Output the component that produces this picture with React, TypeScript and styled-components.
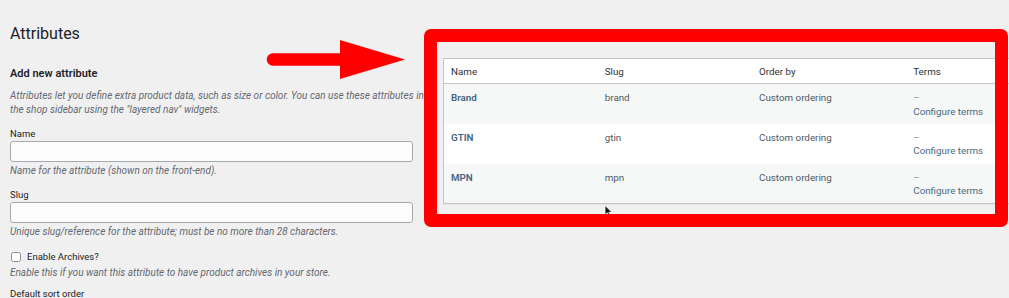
import React from "react";
import styled, { createGlobalStyle } from "styled-components";

const Global = createGlobalStyle`
  html, body { margin: 0; padding: 0; }
  body {
    background: #f0f0f0;
    font-family: Roboto, "Noto Sans", Arial, sans-serif;
    color: #1d2327;
    overflow: hidden;
    width: 1009px;
    height: 298px;
  }
`;

const Page = styled.div`
  position: relative;
  width: 1009px;
  height: 298px;
  overflow: hidden;
  padding: 24px 0 0 10px;
  box-sizing: border-box;
`;

const Title = styled.h1`
  margin: 0;
  font-size: 16px;
  line-height: 20px;
  font-weight: 400;
  color: #1d2327;
`;

const Columns = styled.div`
  display: flex;
  align-items: flex-start;
  gap: 15px;
`;

const LeftCol = styled.div`
  flex: none;
  width: 418px;
`;

const RightCol = styled.div`
  flex: none;
  width: 618px;
  padding-top: 14px;
`;

const SectionTitle = styled.h2`
  margin: 23px 0 0;
  font-size: 11px;
  line-height: 14px;
  font-weight: 600;
  color: #1d2327;
`;

const Help = styled.p<{ $top?: number }>`
  margin: ${(p) => p.$top ?? 0}px 0 0;
  font-size: 10px;
  line-height: 14px;
  font-style: italic;
  color: #646970;
`;

const Label = styled.label<{ $top: number }>`
  display: block;
  margin-top: ${(p) => p.$top}px;
  font-size: 9.5px;
  line-height: 13px;
  color: #1d2327;
`;

const Input = styled.div`
  margin-top: 1px;
  width: 403px;
  height: 21px;
  box-sizing: border-box;
  border: 1px solid #a7aaad;
  border-radius: 3px;
  background: #fdfdfd;
`;

const CheckRow = styled.div`
  display: flex;
  align-items: center;
  gap: 6px;
  margin-top: 11px;
  padding-left: 1px;
  font-size: 9.5px;
  line-height: 13px;
  color: #1d2327;
`;

const Box = styled.span`
  width: 10px;
  height: 10px;
  box-sizing: border-box;
  border: 1px solid #8c8f94;
  border-radius: 2.5px;
  background: #fff;
`;

const Table = styled.table`
  width: 100%;
  border-collapse: collapse;
  background: #fff;
  border: 1px solid #c3c4c7;
  box-shadow: 0 1px 1px rgba(0, 0, 0, 0.04);
  table-layout: fixed;
  font-size: 9.8px;
`;

const Th = styled.th`
  text-align: left;
  font-weight: 400;
  color: #2c3338;
  padding: 0 7px;
  height: 24px;
  line-height: 13px;
  border-bottom: 1px solid #c3c4c7;
  vertical-align: middle;
`;

const Tr = styled.tr<{ $alt: boolean }>`
  background: ${(p) => (p.$alt ? "#f6f7f7" : "#fff")};
`;

const Td = styled.td`
  vertical-align: top;
  padding: 7px 7px 0;
  height: 40px;
  box-sizing: border-box;
  line-height: 13.5px;
  color: #50575e;
`;

const NameLink = styled.span`
  font-weight: 600;
  color: #42667f;
`;

const Dash = styled.div`
  color: #8c8f94;
`;

const Configure = styled.div`
  color: #4a6b82;
`;

const Annotation = styled.div`
  position: absolute;
  left: 424px;
  top: 29px;
  width: 584px;
  height: 198px;
  box-sizing: border-box;
  border: 13px solid #ff0000;
  border-radius: 7px;
  pointer-events: none;
`;

const ArrowSvg = styled.svg`
  position: absolute;
  left: 264px;
  top: 38px;
`;

const CursorSvg = styled.svg`
  position: absolute;
  left: 604px;
  top: 205px;
`;

const rows = [
  { name: "Brand", slug: "brand" },
  { name: "GTIN", slug: "gtin" },
  { name: "MPN", slug: "mpn" },
];

export default function App() {
  return (
    <>
      <Global />
      <Page>
        <Title>Attributes</Title>
        <Columns>
          <LeftCol>
            <SectionTitle>Add new attribute</SectionTitle>
            <Help $top={8}>
              Attributes let you define extra product data, such as size or color. You can use these attributes in the shop sidebar using the "layered nav" widgets.
            </Help>
            <Label $top={10}>Name</Label>
            <Input />
            <Help $top={2}>Name for the attribute (shown on the front-end).</Help>
            <Label $top={10}>Slug</Label>
            <Input />
            <Help $top={2}>Unique slug/reference for the attribute; must be no more than 28 characters.</Help>
            <CheckRow>
              <Box />
              <span>Enable Archives?</span>
            </CheckRow>
            <Help $top={3}>Enable this if you want this attribute to have product archives in your store.</Help>
            <Label $top={7}>Default sort order</Label>
          </LeftCol>
          <RightCol>
            <Table>
              <thead>
                <tr>
                  <Th>Name</Th>
                  <Th>Slug</Th>
                  <Th>Order by</Th>
                  <Th>Terms</Th>
                </tr>
              </thead>
              <tbody>
                {rows.map((r, i) => (
                  <Tr key={r.slug} $alt={i % 2 === 0}>
                    <Td>
                      <NameLink>{r.name}</NameLink>
                    </Td>
                    <Td>{r.slug}</Td>
                    <Td>Custom ordering</Td>
                    <Td>
                      <Dash>–</Dash>
                      <Configure>Configure terms</Configure>
                    </Td>
                  </Tr>
                ))}
              </tbody>
            </Table>
          </RightCol>
        </Columns>
        <ArrowSvg width="144" height="44" viewBox="0 0 144 44">
          <line x1="9" y1="21.5" x2="80" y2="21.5" stroke="#ff0000" strokeWidth="12.5" strokeLinecap="round" />
          <polygon points="76,2 76,41 141,21.5" fill="#ff0000" />
        </ArrowSvg>
        <CursorSvg width="10" height="12" viewBox="0 0 10 12">
          <path d="M1 0.5 L1 10 L3.3 7.8 L5 11.5 L6.4 10.9 L4.8 7.3 L8 7.3 Z" fill="#111" stroke="#fff" strokeWidth="0.8" />
        </CursorSvg>
        <Annotation />
      </Page>
    </>
  );
}
